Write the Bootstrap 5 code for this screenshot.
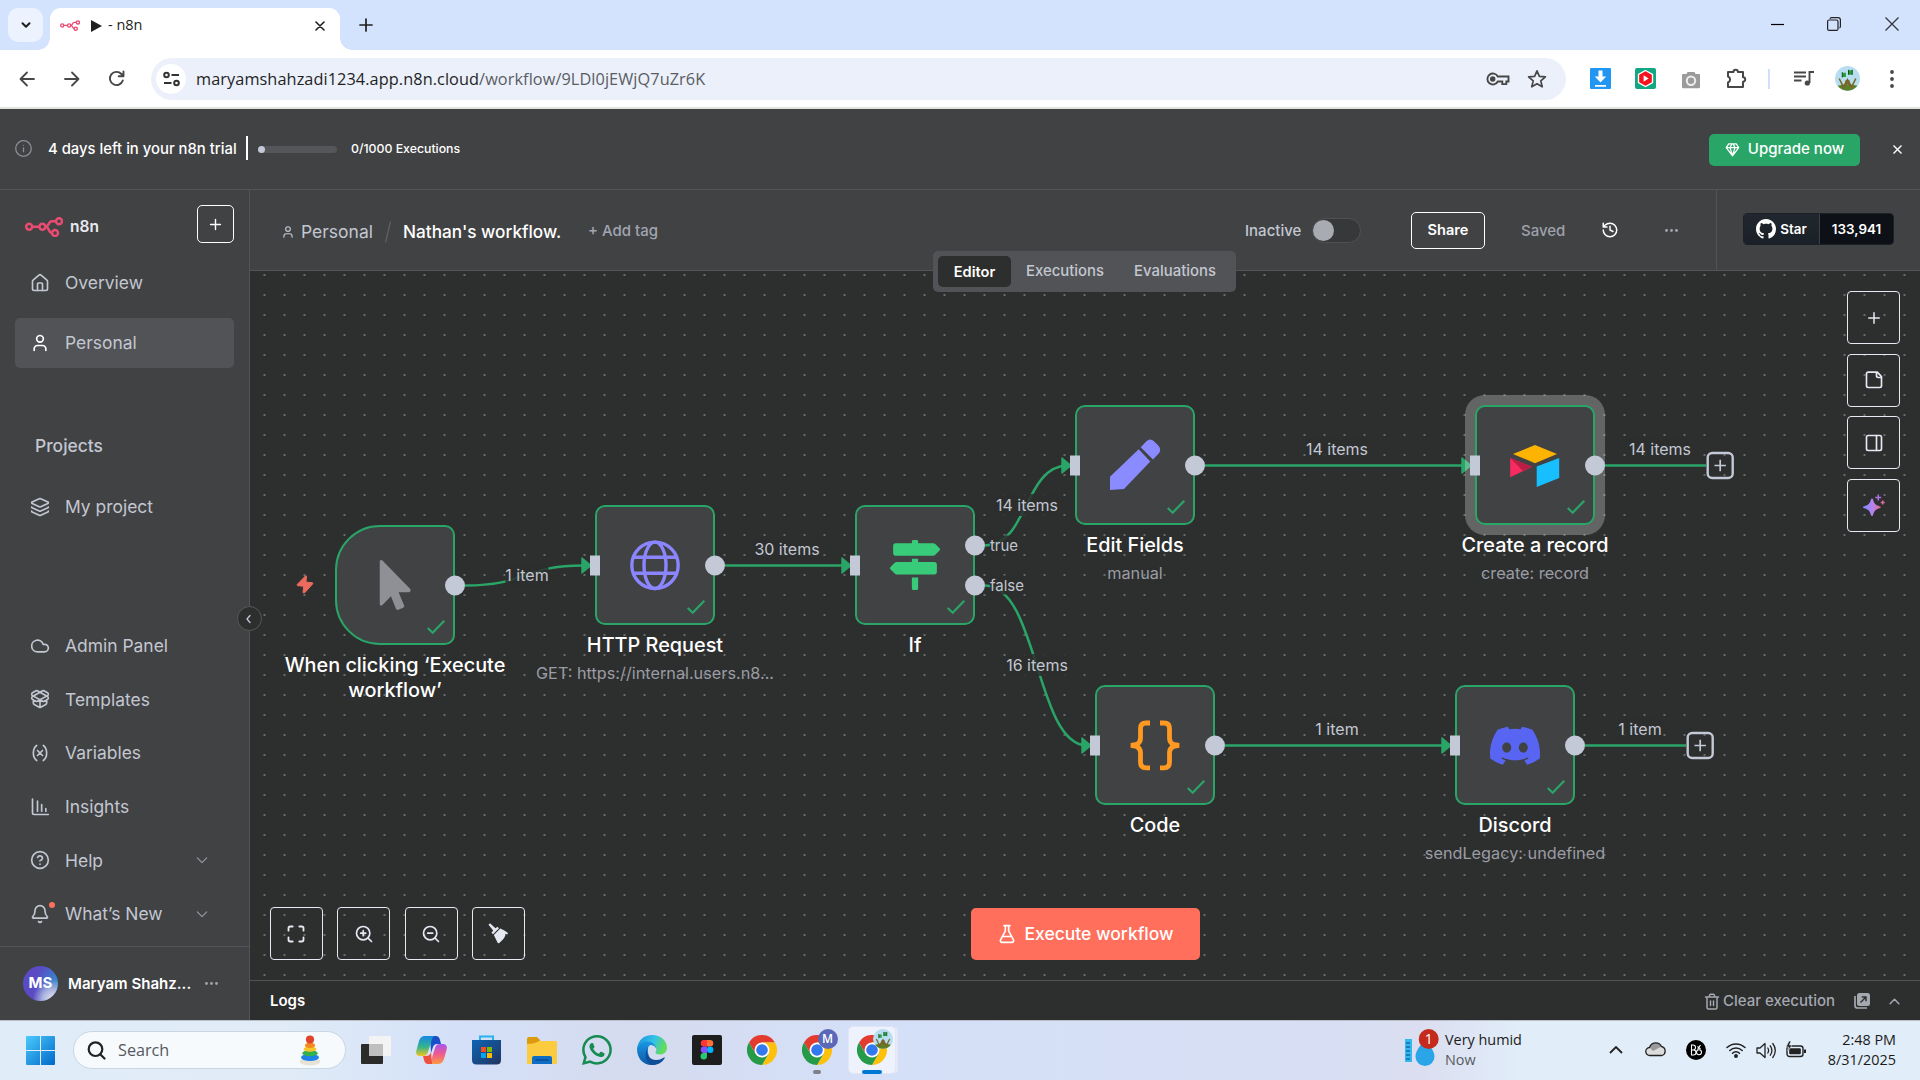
<!DOCTYPE html>
<html lang="en">
<head>
<meta charset="utf-8">
<meta name="viewport" content="width=device-width, initial-scale=1">
<title>▶ - n8n</title>
<link href="https://cdn.jsdelivr.net/npm/bootstrap@5.3.0/dist/css/bootstrap.min.css" rel="stylesheet">
<script src="https://cdn.jsdelivr.net/npm/bootstrap@5.3.0/dist/js/bootstrap.bundle.min.js"></script>
<style>
:root{--pane:#414244;--line:#535457;--ink:#c3c7d1;--ok:#2aa568;--board:#2d2e2e}
html,body{height:100%;margin:0}
body{width:1920px;height:1080px;overflow:hidden;font-family:Inter,"Liberation Sans",sans-serif;font-size:15px;line-height:1.25;color:var(--ink);background:var(--board)}
svg{display:block;flex:none}
.stroke-ic{fill:none;stroke:currentColor;stroke-width:2;stroke-linecap:round;stroke-linejoin:round}
.ui-os{font-family:"Open Sans","Noto Sans",sans-serif}
.cell{display:flex;align-items:center;justify-content:center;flex:none}

/* browser */
.tabstrip{height:50px;background:#d3e2fd;color:#1f1f1f}
.tab-search{width:35px;height:34px;margin:8px 0 0 8px;background:#ecf2fe;border-radius:10px}
.tab-live{width:290px;height:42px;margin:8px 0 0 7px;background:#fff;border-radius:11px 11px 0 0;padding:0 0 7px 10px;position:relative}
.tab-live::before,.tab-live::after{content:"";position:absolute;bottom:0;width:12px;height:12px}
.tab-live::before{left:-12px;background:radial-gradient(circle at 0 0,transparent 11.5px,#fff 12px)}
.tab-live::after{right:-12px;background:radial-gradient(circle at 100% 0,transparent 11.5px,#fff 12px)}
.win-btn{width:57px;height:48px}
.toolbar{height:59px;background:#fff;border-bottom:2px solid #dfe4df;color:#474747;position:relative}
.toolbar .nav-cell{width:45px}
.omnibox{width:1415px;height:42px;margin-left:12px;border-radius:21px;background:#ebf0fa;padding-left:5px}
.site-info{width:30px;height:30px;border-radius:50%;background:#fff}
.url{font-size:16.3px;letter-spacing:.08px;margin:1px 0 0 10px;color:#5a5d63;white-space:nowrap;line-height:24px}
.url span{color:#1f1f1f}
.ext{width:45.5px}

/* trial banner */
.trial{height:81px;background:var(--pane);border-bottom:1px solid var(--line);color:#fff;padding-left:15px}
.trial-text{font-size:14.85px;font-weight:500;margin-left:16px;width:190px;white-space:nowrap}
.trial-rule{width:2px;height:24px;background:#fff;margin-left:8px;margin-top:-3px}
.quota{width:79px;height:7px;border-radius:4px;background:#55565a;margin-left:10px}
.quota div{width:7px;height:7px;border-radius:50%;background:#c3c9d6}
.quota-text{font-size:12.3px;font-weight:500;margin-left:14px}
.btn-upgrade{width:151px;height:32px;border-radius:5px;background:#29a568;color:#fff;font-size:15px;font-weight:500;margin-right:33px;margin-top:1px}

/* sidebar */
.side{width:250px;background:var(--pane);border-right:1px solid var(--line);font-size:17.45px}
.side-add{width:37px;height:38px;border:1.3px solid #fff;border-radius:5px;color:#fff}
.side-link{height:50px;margin:0 15px;padding-left:15px;border-radius:5px;display:flex;align-items:center;color:var(--ink);text-decoration:none}
.side-link .lbl{margin-left:15px}
.side-link.on{background:#525356}
.side-low .side-link{height:53.7px}
.side-foot{height:74px;border-top:1px solid var(--line);padding:0 0 0 23px}
.avatar{width:35px;height:35px;border-radius:50%;background:radial-gradient(circle at 85% 95%,#e8e3f2 0,#aab6e0 22%,transparent 45%),radial-gradient(circle at 100% 45%,#2f8fd0 0,transparent 55%),#5a4bc4;color:#fff;font-weight:700;font-size:15px}

/* workflow header */
.wf-head{height:81px;background:var(--pane);border-bottom:1px solid var(--line);position:relative;white-space:nowrap}
.switch{width:49px;height:25px;border-radius:13px;background:#37383a;border:1px solid #505154;padding:1px 0}
.switch div{width:21px;height:21px;border-radius:50%;background:#a9abb3}
.btn-share{width:74px;height:37px;border:1.3px solid #fff;border-radius:5px;color:#fff;font-weight:600;font-size:14.6px;padding-top:1px!important}
.gh{height:32px;width:151px;border-radius:4px;overflow:hidden;color:#fff;font-weight:600;font-size:13.4px;border:1px solid #1c2128}
.gh>div:first-child{width:76px;background:linear-gradient(#20272f,#1a2027);border-right:1px solid #3c4045}
.gh>div:last-child{flex:1;background:#0d1117}
.view-tabs{position:absolute;left:683px;top:60.5px;width:303px;height:41.5px;background:#525356;border-radius:5px;padding:5px;z-index:5;font-weight:500;font-size:14.9px}
.view-tabs .cell{padding-top:1px}
.view-tabs .on{background:var(--board);color:#fff;border-radius:5px;font-weight:600;font-size:14.6px}

/* board */
.board{position:relative;flex:1;overflow:hidden;background-color:var(--board);background-image:radial-gradient(circle at 10px 10px,#8b8d8f 0,#77797b .6px,transparent 1.15px);background-size:20px 20px;background-position:4.5px -6px}
.plane{position:absolute;left:-250px;top:-271px;width:1920px;height:1080px}
.wires{position:absolute;left:0;top:0}
.wnode{position:absolute;width:250px;display:flex;flex-direction:column;align-items:center;text-align:center}
.wbox{width:120px;height:120px;border:2.2px solid var(--ok);border-radius:10px;background:var(--pane);position:relative}
.wbox>svg{position:absolute;left:-2px;top:-2px}
.wbox.start{border-radius:45px 10px 10px 45px}
.wbox.picked{box-shadow:0 0 0 10px rgba(255,255,255,.26)}
.wtitle{font-size:19.85px;font-weight:500;color:#fff;line-height:25px;margin-top:7.5px}
.wsub{font-size:16.25px;color:#9a9ca3;line-height:24px;margin-top:3.5px;white-space:nowrap}
.wlabel{position:absolute;transform:translate(-50%,-50%);font-size:16px;line-height:22px;color:var(--ink);background:rgba(45,46,46,.85);white-space:nowrap;margin-top:-1px}
.wport{font-size:15px;line-height:19px}
.right-tools{position:absolute;right:20px;top:20px;gap:9.5px;display:flex;flex-direction:column}
.sq{width:52.6px;height:53px;border:1.3px solid #e6e8f2;border-radius:4px;color:#e6e8f2;display:flex;align-items:center;justify-content:center;background:none}
.low-tools{position:absolute;left:20px;bottom:20px;gap:14.9px;display:flex}
.btn-exec{position:absolute;left:721px;top:637px;width:229px;height:52px;border-radius:5px;background:#ff6f5c;color:#fff;font-size:17.5px;font-weight:500;display:flex;align-items:center;justify-content:center;border:0;white-space:nowrap}
.logbar{height:40px;border-top:1px solid var(--line);background:var(--board);color:#a5a8b1;font-weight:500;padding:1px 0 0 20px}
.fold{position:absolute;left:237px;top:606px;width:25px;height:25px;border-radius:50%;background:var(--board);border:1px solid #565759;z-index:6;display:flex;align-items:center;justify-content:center}

/* taskbar */
.taskbar{height:60px;border-top:1px solid #b9bec8;padding-bottom:1px;background:linear-gradient(90deg,#e0ecf7 0,#e0ebf7 15%,#d4e0f8 24%,#d5dbef 33%,#d4e0f8 45%,#d8dff4 70%,#dbdef0 74%,#e1edf9 79%);color:#1b1b1b}
.find{width:273px;height:38px;border-radius:19px;background:#f6fafd;border:1px solid #c9d6e4;padding-left:13px;margin-left:18px}
.task{width:55px;height:60px}
.task-live{width:48px;height:48px;background:#eef2fc;border:1px solid #e2e6f4;border-radius:5px;box-shadow:3px 0 0 -1px #e3e9f8}
.tiny{font-size:14.4px;line-height:20px}
</style>
</head>
<body class="d-flex flex-column">

<svg width="0" height="0" class="position-absolute">
  <defs>
    <symbol id="n8n" viewBox="0 0 38 20"><g fill="none" stroke="#ea4b71" stroke-width="2.5"><circle cx="4.2" cy="9.8" r="3"/><circle cx="17.4" cy="9.8" r="3"/><circle cx="34" cy="4.2" r="3"/><circle cx="30" cy="16" r="3"/><path d="M7.2 9.8h7.2M20.4 9.8c4 0 2.500-5.600 6.500-5.600h4M20.400 9.800c4 0 3 6.200 6.600 6.200"/></g></symbol>
    <symbol id="chrome" viewBox="0 0 48 48"><path fill="#e33b2e" d="M3.200 12A24 24 0 0 1 44.800 12H24L13.600 30z"/><path fill="#fdc10c" d="M44.800 12A24 24 0 0 1 24 48L34.400 30 24 12z"/><path fill="#259a48" d="M24 48A24 24 0 0 1 3.200 12L13.600 30h20.800z"/><circle cx="24" cy="24" r="12" fill="#fff"/><circle cx="24" cy="24" r="9.300" fill="#3279ef"/></symbol>
    <symbol id="grove" viewBox="0 0 24 24"><circle cx="12" cy="12" r="12" fill="#b7def0"/><path d="M2.500 19q9.500-3 19 0A12 12 0 0 1 2.500 19" fill="#5d7f2a"/><path d="M4 12l4 8 4-7 4 7 4-8M8 20l6-6M16 20l-6-6" fill="none" stroke="#7a6426" stroke-width="1.500"/><path d="M7 6.500h3.500v4H7zM13 4h3.500v4.500H13z" fill="#25a13a"/><path d="M7 6v5M13 3.500v5M16.500 3.500v5" stroke="#204a20" stroke-width="1"/></symbol>
    <symbol id="plus" viewBox="0 0 24 24"><path d="M5 12h14M12 5v14"/></symbol>
    <symbol id="person" viewBox="0 0 24 24"><path d="M19 21v-2a4 4 0 0 0-4-4H9a4 4 0 0 0-4 4v2"/><circle cx="12" cy="7" r="4"/></symbol>
    <symbol id="down" viewBox="0 0 24 24"><path d="m4 8.500 8 8 8-8"/></symbol>
    <symbol id="dots" viewBox="0 0 24 24"><g fill="currentColor" stroke="none"><circle cx="4" cy="12" r="2.300"/><circle cx="12" cy="12" r="2.300"/><circle cx="20" cy="12" r="2.300"/></g></symbol>
    <symbol id="tick" viewBox="0 0 120 120"><path d="M92.700 103l5 4.700L109.300 95.700" fill="none" stroke="#2aa568" stroke-width="2.200"/></symbol>
  </defs>
</svg>

<!-- tab strip -->
<div class="tabstrip d-flex flex-none">
  <div class="tab-search cell"><svg width="12" height="12" viewBox="0 0 12 12" class="stroke-ic"><path d="M2.500 4.200 6 7.700l3.500-3.500"/></svg></div>
  <div class="tab-live d-flex align-items-center">
    <svg width="20" height="11"><use href="#n8n"/></svg>
    <svg width="11" height="12" viewBox="0 0 11 12" style="margin-left:11px"><path d="M0 0l11 6-11 6z" fill="#1f1f1f"/></svg>
    <span class="ui-os" style="font-size:14.500px;margin:-1px 0 0 6px">- n8n</span>
    <svg width="10" height="10" viewBox="0 0 10 10" class="stroke-ic ms-auto" style="margin-right:15px;stroke-width:1.600"><path d="M1 1l8 8M9 1 1 9"/></svg>
  </div>
  <div class="cell" style="width:52px"><svg width="14" height="14" viewBox="0 0 14 14" class="stroke-ic" style="stroke-width:1.700"><path d="M7 1v12M1 7h12"/></svg></div>
  <div class="d-flex ms-auto">
    <div class="win-btn cell"><svg width="13" height="13" viewBox="0 0 13 13" stroke="#000" stroke-width="1.200"><path d="M0 6.500h13"/></svg></div>
    <div class="win-btn cell"><svg width="14" height="14" viewBox="0 0 14 14" fill="none" stroke="#222" stroke-width="1.200" style="margin-right:2px"><rect x=".600" y="3" width="10.400" height="10.400" rx="1.500"/><path d="M3 1.800Q3.200.600 4.600.600H11q2.400 0 2.400 2.400v6.500q0 1.200-1 1.400"/></svg></div>
    <div class="win-btn cell"><svg width="14" height="14" viewBox="0 0 14 14" stroke="#333" stroke-width="1.200"><path d="M.500.500l13 13M13.500.500l-13 13"/></svg></div>
  </div>
</div>

<!-- toolbar -->
<div class="toolbar d-flex align-items-center flex-none">
  <div class="nav-cell cell" style="margin-left:4px"><svg width="16" height="16" viewBox="0 0 16 16" class="stroke-ic" style="stroke-width:1.800"><path d="M15 8H1.500M8 1.500 1.500 8 8 14.500"/></svg></div>
  <div class="nav-cell cell"><svg width="16" height="16" viewBox="0 0 16 16" class="stroke-ic" style="stroke-width:1.800"><path d="M1 8h13.500M8 1.500 14.500 8 8 14.500"/></svg></div>
  <div class="nav-cell cell"><svg width="17" height="17" viewBox="0 0 17 17" class="stroke-ic" style="stroke-width:1.900"><path d="M14.800 10.500A6.600 6.600 0 1 1 13.400 4L15.500 6.300M15.500 1.500v4.800h-4.800"/></svg></div>
  <div class="omnibox d-flex align-items-center">
    <div class="site-info cell"><svg width="17" height="16" viewBox="0 0 17 16" fill="none" stroke="#333" stroke-width="2"><circle cx="3.500" cy="4" r="2.300"/><path d="M8.500 4H16M1 12h7.500"/><circle cx="13.500" cy="12" r="2.300"/></svg></div>
    <div class="url ui-os"><span>maryamshahzadi1234.app.n8n.cloud</span>/workflow/9LDl0jEWjQ7uZr6K</div>
    <svg class="ms-auto" width="24" height="14" viewBox="0 0 24 14" fill="none" stroke="#474747" stroke-width="1.900" style="margin-top:1px"><path d="M11.800 4.500H22.500v5h-2.200v2.600h-4V9.500h-4.500A5.500 5.500 0 1 1 11.800 4.500z"/><circle cx="6.700" cy="7" r="1.800" fill="#474747"/></svg>
    <svg width="20" height="20" viewBox="0 0 20 20" fill="none" stroke="#474747" stroke-width="1.700" stroke-linejoin="round" style="margin:0 19px 0 17px"><path d="M10 1.800l2.400 5.600 6 .500-4.600 4 1.400 5.900L10 14.700l-5.200 3.100 1.400-5.900-4.600-4 6-.500z"/></svg>
  </div>
  <div class="d-flex align-items-center" style="margin-left:11.500px">
    <div class="ext cell"><svg width="21" height="21" viewBox="0 0 21 21"><rect width="21" height="21" rx="1" fill="#2196f3"/><path d="M8.500 2.500h4v6h3.700l-5.700 6-5.700-6h3.700zM5 17h11v1.800H5z" fill="#fff"/></svg></div>
    <div class="ext cell"><svg width="21" height="21" viewBox="0 0 21 21"><rect width="21" height="21" rx="2" fill="#12a683"/><path d="M10.500 2.500l7 4v8l-7 4-7-4v-8z" fill="#f5111d" stroke="#fff" stroke-width="1.300"/><path d="M8.600 7.300l5 3.200-5 3.200z" fill="#fff"/></svg></div>
    <div class="ext cell"><svg width="20" height="18" viewBox="0 0 20 18" style="margin-top:2px"><path d="M6.500 1h7l1 2H18q1 0 1 1v12q0 1.300-1.300 1.300H2.300Q1 17.300 1 16V4q0-1 1-1h3.500z" fill="#9b9b9b"/><circle cx="10" cy="9.800" r="4.200" fill="none" stroke="#eee" stroke-width="2"/></svg></div>
    <div class="ext cell"><svg width="21" height="21" viewBox="0 0 21 21" fill="none" stroke="#474747" stroke-width="2" stroke-linejoin="round"><path d="M2 4h5.500a2.200 2.200 0 0 1 4.400 0H17v5.300a2.200 2.200 0 0 1 0 4.400V19H2v-4.500a3.200 3.200 0 0 0 0-6z"/></svg></div>
    <div style="width:2.500px;height:20px;background:#d0e0fb;margin:0 12px 0 8px"></div>
    <div class="cell" style="width:43px"><svg width="20" height="17" viewBox="0 0 20 17" fill="none" stroke="#474747" stroke-width="1.900" style="margin-top:-1px"><path d="M0 2.500h12M0 6.500h12M0 10.500h7.500M15.500 13V2H20"/><circle cx="13.300" cy="13" r="2.600" fill="#474747" stroke="none"/></svg></div>
    <div class="cell" style="width:45px"><svg width="25" height="25"><use href="#grove"/></svg></div>
    <div class="cell" style="width:44px"><svg width="4" height="18" viewBox="0 0 4 18" fill="#474747"><circle cx="2" cy="2" r="1.900"/><circle cx="2" cy="9" r="1.900"/><circle cx="2" cy="16" r="1.900"/></svg></div>
  </div>
</div>

<!-- trial banner -->
<div class="trial d-flex align-items-center flex-none">
  <svg width="17" height="17" viewBox="0 0 24 24" class="stroke-ic" style="color:#8c8e95;stroke-width:1.800;margin-top:-1px"><circle cx="12" cy="12" r="11"/><path d="M12 16.500v-5.500M12 7.500v.010"/></svg>
  <span class="trial-text">4 days left in your n8n trial</span>
  <div class="trial-rule"></div>
  <div class="quota"><div></div></div>
  <span class="quota-text">0/1000 Executions</span>
  <button class="btn btn-upgrade ms-auto p-0 border-0 d-flex align-items-center justify-content-center"><svg width="15" height="15" viewBox="0 0 24 24" class="stroke-ic" style="margin-right:8px"><path d="M6 3h12l4 6-10 13L2 9zM11 3 8 9l4 13 4-13-3-6M2 9h20"/></svg>Upgrade now</button>
  <svg width="9" height="9" viewBox="0 0 9 9" stroke="#fff" stroke-width="1.400" style="margin-right:18px"><path d="M.500.500l8 8M8.500.500l-8 8"/></svg>
</div>

<div class="d-flex flex-fill" style="min-height:0">
  <!-- sidebar -->
  <nav class="side d-flex flex-column flex-shrink-0">
    <div class="d-flex" style="height:68px;padding:15px 15px 0 25px">
      <svg width="38" height="20" style="margin-top:12px"><use href="#n8n"/></svg>
      <span style="margin:12px 0 0 7px;font-size:15.500px;font-weight:600;color:#e8eaf0">n8n</span>
      <div class="side-add cell ms-auto"><svg width="17" height="17" class="stroke-ic"><use href="#plus"/></svg></div>
    </div>
    <a class="side-link"><svg width="20" height="20" viewBox="0 0 24 24" class="stroke-ic"><path d="M15 21v-8a1 1 0 0 0-1-1h-4a1 1 0 0 0-1 1v8"/><path d="M3 10a2 2 0 0 1 .710-1.530l7-6a2 2 0 0 1 2.580 0l7 6A2 2 0 0 1 21 10v9a2 2 0 0 1-2 2H5a2 2 0 0 1-2-2z"/></svg><span class="lbl">Overview</span></a>
    <a class="side-link on" style="margin-top:10px"><svg width="20" height="20" class="stroke-ic" style="color:#fff"><use href="#person"/></svg><span class="lbl">Personal</span></a>
    <div style="margin:67px 0 0 35px;font-weight:500;line-height:22px">Projects</div>
    <a class="side-link" style="margin-top:25px"><svg width="20" height="20" viewBox="0 0 24 24" class="stroke-ic"><path d="M12.830 2.180a2 2 0 0 0-1.660 0L2.600 6.080a1 1 0 0 0 0 1.830l8.580 3.910a2 2 0 0 0 1.660 0l8.580-3.900a1 1 0 0 0 0-1.830zM2 12a1 1 0 0 0 .580.910l8.600 3.910a2 2 0 0 0 1.650 0l8.580-3.900A1 1 0 0 0 22 12M2 17a1 1 0 0 0 .580.910l8.600 3.910a2 2 0 0 0 1.650 0l8.580-3.900A1 1 0 0 0 22 17"/></svg><span class="lbl">My project</span></a>
    <div class="side-low mt-auto" style="margin-bottom:5px">
      <a class="side-link"><svg width="20" height="20" viewBox="0 0 24 24" class="stroke-ic"><path d="M17.500 19H9a7 7 0 1 1 6.710-9h1.790a4.500 4.500 0 1 1 0 9Z"/></svg><span class="lbl">Admin Panel</span></a>
      <a class="side-link"><svg width="20" height="20" viewBox="0 0 24 24" class="stroke-ic"><path d="M12 22v-9M15.170 2.210a1.670 1.670 0 0 1 1.630 0L21 4.570a1.930 1.930 0 0 1 0 3.360L8.820 14.790a1.655 1.655 0 0 1-1.640 0L3 12.430a1.930 1.930 0 0 1 0-3.360zM20 13v3.870a2.060 2.060 0 0 1-1.110 1.830l-6 3.080a1.930 1.930 0 0 1-1.780 0l-6-3.080A2.060 2.060 0 0 1 4 16.870V13M21 12.430a1.930 1.930 0 0 0 0-3.360L8.830 2.200a1.640 1.640 0 0 0-1.630 0L3 4.570a1.930 1.930 0 0 0 0 3.360l12.180 6.860a1.636 1.636 0 0 0 1.630 0z"/></svg><span class="lbl">Templates</span></a>
      <a class="side-link"><svg width="20" height="20" viewBox="0 0 24 24" class="stroke-ic"><path d="M8 21s-4-3-4-9 4-9 4-9M16 3s4 3 4 9-4 9-4 9M15 9l-6 6M9 9l6 6"/></svg><span class="lbl">Variables</span></a>
      <a class="side-link"><svg width="20" height="20" viewBox="0 0 24 24" class="stroke-ic"><path d="M3 2.500V19a2 2 0 0 0 2 2h17M9 17V5M14 17V9M19 17v-3"/></svg><span class="lbl">Insights</span></a>
      <a class="side-link"><svg width="20" height="20" viewBox="0 0 24 24" class="stroke-ic"><circle cx="12" cy="12" r="10"/><path d="M9.090 9a3 3 0 0 1 5.830 1c0 2-3 3-3 3M12 17h.010"/></svg><span class="lbl">Help</span><svg width="14" height="14" class="stroke-ic ms-auto" style="margin-right:25.500px;color:#9799a0"><use href="#down"/></svg></a>
      <a class="side-link position-relative"><svg width="20" height="20" viewBox="0 0 24 24" class="stroke-ic"><path d="M10.268 21a2 2 0 0 0 3.464 0M3.262 15.326A1 1 0 0 0 4 17h16a1 1 0 0 0 .740-1.673C19.410 13.956 18 12.499 18 8A6 6 0 0 0 6 8c0 4.499-1.411 5.956-2.738 7.326"/></svg><span class="position-absolute rounded-circle" style="width:6px;height:6px;background:#ff6f5c;left:34px;top:15px"></span><span class="lbl">What’s New</span><svg width="14" height="14" class="stroke-ic ms-auto" style="margin-right:25.500px;color:#9799a0"><use href="#down"/></svg></a>
    </div>
    <div class="side-foot d-flex align-items-center">
      <div class="avatar cell" style="margin-top:-1px">MS</div>
      <span style="margin-left:10px;width:124px;font-size:15.050px;font-weight:600;color:#fff;white-space:nowrap;padding-top:2px">Maryam Shahz...</span>
      <svg width="15" height="15" style="margin-left:12px;color:#a0a2a9"><use href="#dots"/></svg>
    </div>
  </nav>
  <div class="fold"><svg width="12" height="12" viewBox="0 0 24 24" class="stroke-ic" style="stroke-width:2.600;margin-right:2px"><path d="m14 5-6 7 6 7"/></svg></div>

  <main class="d-flex flex-column flex-fill" style="min-width:0">
    <!-- workflow header -->
    <div class="wf-head d-flex align-items-center flex-none">
      <svg width="14" height="14" class="stroke-ic" style="margin-left:31px;margin-top:3px"><use href="#person"/></svg>
      <span style="font-size:17.500px;margin-left:6px;width:72px;padding-top:3px">Personal</span>
      <svg width="6" height="22" viewBox="0 0 6 22" stroke="#5f6064" stroke-width="1.300" style="margin:3px 0 0 12px"><path d="M.500 21.500l5-21"/></svg>
      <span style="font-size:17.200px;font-weight:500;color:#fff;margin-left:12px;width:159px;padding-top:3px">Nathan's workflow.</span>
      <span style="font-weight:500;margin-left:26px;color:#a2a5b0;padding-top:2px">+ Add tag</span>
      <div class="d-flex align-items-center ms-auto h-100">
        <span style="font-weight:500;width:56px;padding-top:2px">Inactive</span>
        <div class="switch" style="margin-left:11px"><div></div></div>
        <button class="btn btn-share p-0" style="margin-left:50px">Share</button>
        <span style="font-weight:500;margin-left:36px;width:45px;color:#9ea1ab;padding-top:2px">Saved</span>
        <svg width="18" height="18" viewBox="0 0 24 24" class="stroke-ic" style="margin-left:35px;color:#fff"><path d="M3 12a9 9 0 1 0 9-9 9.750 9.750 0 0 0-6.740 2.740L3 8M3 3v5h5M12 7v5l4 2"/></svg>
        <svg width="15" height="15" style="margin-left:45px;color:#a2a5b0"><use href="#dots"/></svg>
        <div style="width:1px;height:80px;background:var(--line);margin-left:37px"></div>
        <div class="gh d-flex" style="margin:-2px 26px 0 26px">
          <div class="cell"><svg width="20" height="20" viewBox="0 0 16 16" fill="#fff" style="margin-right:4px"><path d="M8 0C3.580 0 0 3.580 0 8c0 3.540 2.290 6.530 5.470 7.590.400.070.550-.170.550-.380 0-.190-.010-.820-.010-1.490-2.010.370-2.530-.490-2.690-.940-.090-.230-.480-.940-.820-1.130-.280-.150-.680-.520-.010-.530.630-.010 1.080.580 1.230.820.720 1.210 1.870.870 2.330.660.070-.520.280-.870.510-1.070-1.780-.200-3.640-.890-3.640-3.950 0-.870.310-1.590.820-2.150-.080-.200-.360-1.020.080-2.120 0 0 .670-.210 2.200.820.640-.180 1.320-.270 2-.270s1.360.090 2 .270c1.530-1.040 2.200-.820 2.200-.820.440 1.100.160 1.920.080 2.120.510.560.820 1.270.820 2.150 0 3.070-1.870 3.750-3.650 3.950.290.250.540.730.540 1.480 0 1.070-.010 1.930-.010 2.200 0 .210.150.460.550.380A8.010 8.010 0 0 0 16 8c0-4.420-3.580-8-8-8z"/></svg>Star</div>
          <div class="cell">133,941</div>
        </div>
      </div>
      <div class="view-tabs d-flex">
        <div class="on cell" style="width:73px">Editor</div>
        <div class="cell" style="width:108px">Executions</div>
        <div class="cell" style="width:112px">Evaluations</div>
      </div>
    </div>

    <!-- board -->
    <div class="board">
      <div class="plane">
        <svg class="wires" width="1920" height="1080" fill="none" stroke="#2aa568" stroke-width="2.500">
          <path d="M465 585.500C528 585.500 521 565.500 584 565.500M725 565.500H846M985 545.500C1028 545.500 1024 465.500 1068 465.500M985 585.500C1038 585.500 1036 745.500 1087 745.500M1205 465.500H1467M1605 465.500H1706M1225 745.500H1447M1585 745.500H1686"/>
          <g fill="#2aa568" stroke-width="1.500" stroke-linejoin="round"><path id="tip" d="M582 558v15l9-7.500z"/><use href="#tip" x="260"/><use href="#tip" x="480" y="-100"/><use href="#tip" x="500" y="180"/><use href="#tip" x="880" y="-100"/><use href="#tip" x="860" y="180"/></g>
          <g stroke="#c3c9d6" stroke-width="2.400"><rect x="1707.700" y="453" width="25" height="25" rx="4.500"/><rect x="1687.700" y="733" width="25" height="25" rx="4.500"/></g>
          <path d="M1714.500 465.500h11.400M1720.200 459.800v11.400M1694.500 745.500h11.400M1700.200 739.800v11.400" stroke="#c3c9d6" stroke-width="1.700"/>
        </svg>

        <div class="wnode" style="left:270px;top:525px">
          <div class="wbox start"><svg width="120" height="120"><svg x="44.500" y="35" width="31.250" height="50" viewBox="0 0 320 512"><path fill="#8f9096" d="M302.189 329.126H196.105l55.831 135.993c3.889 9.428-.555 19.999-9.444 23.999l-49.165 21.427c-9.165 4-19.443-.571-23.332-9.714l-53.053-129.136-86.664 89.138C18.729 472.710 0 463.554 0 447.977V18.299C0 1.899 19.921-6.096 30.277 5.443l284.412 292.542c11.472 11.179 3.007 31.141-12.500 31.141z"/></svg><use href="#tick"/></svg></div>
          <div class="wtitle">When clicking ‘Execute workflow’</div>
        </div>
        <div class="wnode" style="left:530px;top:505px">
          <div class="wbox"><svg width="120" height="120"><g fill="none" stroke="#8b85ff" stroke-width="3.400"><circle cx="60" cy="60.300" r="23.200"/><ellipse cx="60" cy="60.300" rx="11" ry="23.200"/><path d="M38 52.300h44M38 68.300h44"/></g><use href="#tick"/></svg></div>
          <div class="wtitle">HTTP Request</div><div class="wsub">GET: https://internal.users.n8...</div>
        </div>
        <div class="wnode" style="left:790px;top:505px">
          <div class="wbox"><svg width="120" height="120"><svg x="35" y="35" width="50" height="50" viewBox="0 0 512 512"><path fill="#38cb79" d="M507.310 84.690L464 41.370c-6-6-14.140-9.370-22.630-9.370H288V16c0-8.840-7.160-16-16-16h-32c-8.840 0-16 7.160-16 16v16H56c-13.250 0-24 10.750-24 24v80c0 13.250 10.750 24 24 24h385.370c8.490 0 16.620-3.370 22.630-9.370l43.310-43.310c6.250-6.260 6.250-16.380 0-22.630zM224 496c0 8.840 7.160 16 16 16h32c8.840 0 16-7.160 16-16V384h-64v112zm232-272H288v-32h-64v32H70.630c-8.490 0-16.620 3.370-22.630 9.370L4.690 276.690c-6.250 6.250-6.250 16.380 0 22.630L48 342.630c6 6 14.140 9.370 22.630 9.370H456c13.250 0 24-10.750 24-24v-80c0-13.250-10.750-24-24-24z"/></svg><use href="#tick"/></svg></div>
          <div class="wtitle">If</div>
        </div>
        <div class="wnode" style="left:1010px;top:405px">
          <div class="wbox"><svg width="120" height="120"><path fill="#8a8bff" d="M63.700 44.300l11.600 12.300L49 84l-14 1V71.700zM65.700 42.300l6-6.300q3.500-3 7 0l5 5q3 4 0 7.500l-5.700 6z"/><use href="#tick"/></svg></div>
          <div class="wtitle">Edit Fields</div><div class="wsub">manual</div>
        </div>
        <div class="wnode" style="left:1030px;top:685px">
          <div class="wbox"><svg width="120" height="120"><path d="M55 38h-4q-5.500 0-5.500 5.500V53q0 4.800-4 6.400L36 60.400l5.500 1q4 1.600 4 6.400v9.500q0 5.500 5.500 5.500h4M65 38h4q5.500 0 5.500 5.500V53q0 4.800 4 6.400l5.500 1-5.500 1q-4 1.600-4 6.400v9.500q0 5.500-5.500 5.500h-4" fill="none" stroke="#ff9922" stroke-width="4.800"/><use href="#tick"/></svg></div>
          <div class="wtitle">Code</div>
        </div>
        <div class="wnode" style="left:1410px;top:405px">
          <div class="wbox picked"><svg width="120" height="120"><path fill="#fcb400" d="M38 49l22-9 22 9-22 9.200z"/><path fill="#18bfff" d="M61.700 61.500l22.500-8.500v20l-22.500 9z"/><path fill="#f82b60" d="M35.200 53l22 8.700-22 10.600z"/><path fill="#ba1e45" d="M35.200 53l22 8.700-9 4.300z"/><use href="#tick"/></svg></div>
          <div class="wtitle">Create a record</div><div class="wsub">create: record</div>
        </div>
        <div class="wnode" style="left:1390px;top:685px">
          <div class="wbox"><svg width="120" height="120"><svg x="35" y="35.700" width="50" height="50" viewBox="0 0 16 16"><path fill="#5865f2" d="M13.545 2.907a13.227 13.227 0 0 0-3.257-1.011.050.050 0 0 0-.052.025c-.141.250-.297.577-.406.833a12.190 12.190 0 0 0-3.658 0 8.258 8.258 0 0 0-.412-.833.051.051 0 0 0-.052-.025c-1.125.194-2.220.534-3.257 1.011a.041.041 0 0 0-.021.018C.356 6.024-.213 9.047.066 12.032c.001.014.010.028.021.037a13.276 13.276 0 0 0 3.995 2.020.050.050 0 0 0 .056-.019c.308-.420.582-.863.818-1.329a.050.050 0 0 0-.010-.059.051.051 0 0 0-.018-.011 8.875 8.875 0 0 1-1.248-.595.050.050 0 0 1-.020-.066.051.051 0 0 1 .015-.019c.084-.063.168-.129.248-.195a.050.050 0 0 1 .051-.007c2.619 1.196 5.454 1.196 8.041 0a.052.052 0 0 1 .053.007c.080.066.164.132.248.195a.051.051 0 0 1-.004.085 8.254 8.254 0 0 1-1.249.594.050.050 0 0 0-.030.030.052.052 0 0 0 .003.041c.240.465.515.909.817 1.329a.050.050 0 0 0 .056.019 13.235 13.235 0 0 0 4.001-2.020.049.049 0 0 0 .021-.037c.334-3.451-.559-6.449-2.366-9.106a.034.034 0 0 0-.020-.019Zm-8.198 7.307c-.789 0-1.438-.724-1.438-1.612 0-.889.637-1.613 1.438-1.613.807 0 1.450.730 1.438 1.613 0 .888-.637 1.612-1.438 1.612Zm5.316 0c-.788 0-1.438-.724-1.438-1.612 0-.889.637-1.613 1.438-1.613.807 0 1.451.730 1.438 1.613 0 .888-.631 1.612-1.438 1.612Z"/></svg><use href="#tick"/></svg></div>
          <div class="wtitle">Discord</div><div class="wsub">sendLegacy: undefined</div>
        </div>

        <!-- ports and the trigger bolt -->
        <svg class="wires" width="1920" height="1080" fill="#c3c9d6">
          <circle cx="455" cy="585.500" r="10"/><circle cx="715" cy="565.500" r="10"/><circle cx="975" cy="545.500" r="10"/><circle cx="975" cy="585.500" r="10"/><circle cx="1195" cy="465.500" r="10"/><circle cx="1215" cy="745.500" r="10"/><circle cx="1595" cy="465.500" r="10"/><circle cx="1575" cy="745.500" r="10"/>
          <path d="M590 555.500h10v20h-10zM850 555.500h10v20h-10zM1070 455.500h10v20h-10zM1090 735.500h10v20h-10zM1470 455.500h10v20h-10zM1450 735.500h10v20h-10z"/>
          <path fill="#ec6a5e" stroke="#ec6a5e" stroke-linejoin="round" d="M305.700 575.700l.800.500-.500 6 6.500.500.300 1-8 9-1.300.300-.500-.800.700-6-6.200-.500-.300-1.200z"/>
        </svg>

        <div class="wlabel" style="left:527px;top:575.500px">1 item</div>
        <div class="wlabel" style="left:787px;top:549.500px">30 items</div>
        <div class="wlabel" style="left:1027px;top:505.500px">14 items</div>
        <div class="wlabel" style="left:1037px;top:665.500px">16 items</div>
        <div class="wlabel" style="left:1337px;top:449.500px">14 items</div>
        <div class="wlabel" style="left:1337px;top:729.500px">1 item</div>
        <div class="wlabel" style="left:1660px;top:449.500px">14 items</div>
        <div class="wlabel" style="left:1640px;top:729.500px">1 item</div>
        <div class="wlabel wport" style="left:1004px;top:546px">true</div>
        <div class="wlabel wport" style="left:1007px;top:586px">false</div>
      </div>

      <div class="right-tools">
        <div class="sq"><svg width="18" height="18" class="stroke-ic"><use href="#plus"/></svg></div>
        <div class="sq"><svg width="20" height="20" viewBox="0 0 24 24" class="stroke-ic"><path d="M16 2.500H5a2 2 0 0 0-2 2V19a2 2 0 0 0 2 2h14a2 2 0 0 0 2-2V8zM15 3v4a2 2 0 0 0 2 2h4"/></svg></div>
        <div class="sq"><svg width="20" height="20" viewBox="0 0 24 24" class="stroke-ic"><rect x="3" y="3" width="18" height="18" rx="2"/><path d="M15 3v18"/></svg></div>
        <div class="sq"><svg width="23" height="23" viewBox="0 0 23 23"><defs><linearGradient id="ai"><stop offset="0" stop-color="#7b8bff"/><stop offset=".55" stop-color="#b483f0"/><stop offset="1" stop-color="#e8658c"/></linearGradient></defs><path fill="url(#ai)" d="M10 4.500q.800 0 1 .800c1 4 2 5.500 7 7.200 1 .300 1 1.200 0 1.500-5 1.700-6 3.200-7 7.300-.200 1-1.700 1-2 0-1-4.100-2-5.600-7.300-7.300-1-.300-1-1.200 0-1.500C7 10.800 8 9.300 9 5.300q.200-.800 1-.800z"/><path d="M16.300.500v6M13.300 3.500h6" stroke="#b070e8" stroke-width="1.500"/><path d="M20.700 6.500v4M18.700 8.500h4" stroke="#e06aa0" stroke-width="1.500"/></svg></div>
      </div>
      <div class="low-tools">
        <div class="sq"><svg width="20" height="20" viewBox="0 0 24 24" class="stroke-ic" style="stroke-width:2.200"><path d="M8 3H5a2 2 0 0 0-2 2v3M21 8V5a2 2 0 0 0-2-2h-3M3 16v3a2 2 0 0 0 2 2h3M16 21h3a2 2 0 0 0 2-2v-3"/></svg></div>
        <div class="sq"><svg width="20" height="20" viewBox="0 0 24 24" class="stroke-ic"><circle cx="11" cy="11" r="8"/><path d="M21 21l-4.350-4.350M11 8v6M8 11h6"/></svg></div>
        <div class="sq"><svg width="20" height="20" viewBox="0 0 24 24" class="stroke-ic"><circle cx="11" cy="11" r="8"/><path d="M21 21l-4.350-4.350M8 11h6"/></svg></div>
        <div class="sq"><svg width="21" height="21" viewBox="0 0 21 21" fill="#e6e8f2"><path d="M.500 1.700 2 .300l5.500 5 2-1.600 1.500 1.500-6 6-1.500-1.500 1.700-2.300z"/><path d="M12.300 5.500q3.500 1 7.700 4.500l-.700 1.500-2-.700q.500 4-6 9.200-1.200.800-1.800-.500L5.800 12z"/></svg></div>
      </div>
      <button class="btn-exec"><svg width="20" height="20" viewBox="0 0 24 24" class="stroke-ic" style="margin-right:7px"><path d="M14 2v6a2 2 0 0 0 .245.960l5.510 10.080A2 2 0 0 1 18 22H6a2 2 0 0 1-1.755-2.960l5.510-10.080A2 2 0 0 0 10 8V2M6.453 15h11.094M8.500 2h7"/></svg>Execute workflow</button>
    </div>

    <!-- logs -->
    <div class="logbar d-flex align-items-center flex-none">
      <span style="color:#fff;font-weight:600;padding-top:1px">Logs</span>
      <svg class="ms-auto stroke-ic" width="16" height="17" viewBox="0 0 16 17" style="stroke-width:1.500"><path d="M1.500 4h13M3 4v10.500q0 1.500 1.500 1.500h7q1.500 0 1.500-1.500V4M5.500 4V2.500q0-1.300 1.300-1.300h2.400q1.300 0 1.300 1.300V4M6.500 8v4.500M9.500 8v4.500"/></svg>
      <span style="margin-left:3px;padding-top:1px">Clear execution</span>
      <svg width="16" height="16" viewBox="0 0 16 16" style="margin-left:18.500px"><rect x="3" y="0" width="13" height="13" rx="2.500" fill="#a5a8b1"/><path d="M1 3v9.500Q1 15 3.500 15H13" fill="none" stroke="#a5a8b1" stroke-width="1.700"/><path d="M6.500 9.500l5-5M7.800 4h4.200v4.200" fill="none" stroke="#2d2e2e" stroke-width="1.400"/></svg>
      <svg width="15" height="15" viewBox="0 0 24 24" class="stroke-ic" style="margin:0 18.500px 0 17px;stroke-width:2.400"><path d="m5 15.500 7-7 7 7"/></svg>
    </div>
  </main>
</div>

<!-- taskbar -->
<div class="taskbar d-flex align-items-center flex-none ui-os">
  <svg width="29" height="29" viewBox="0 0 29 29" style="margin-left:26px"><defs><linearGradient id="win" x1="0" y1="0" x2="1" y2="1"><stop offset="0" stop-color="#4ccbfd"/><stop offset="1" stop-color="#0067c8"/></linearGradient></defs><path fill="url(#win)" d="M1 0h13v14H0V1q0-1 1-1zM15 0h13q1 0 1 1v13H15zM0 15h14v14H1q-1 0-1-1zM15 15h14v13q0 1-1 1H15z"/></svg>
  <div class="find d-flex align-items-center">
    <svg width="19" height="19" viewBox="0 0 19 19" fill="none" stroke="#222" stroke-width="2.200" stroke-linecap="round"><circle cx="8.500" cy="8.200" r="6.800"/><path d="M13.200 13.200l4.300 4.300"/></svg>
    <span style="font-size:16.200px;margin:1px 0 0 12px;color:#55585c">Search</span>
    <svg class="ms-auto" width="22" height="31" viewBox="0 0 22 31" style="margin-right:24px"><ellipse cx="11" cy="26.500" rx="10.500" ry="4" fill="#e6e2d6"/><ellipse cx="11" cy="22.500" rx="9" ry="3.400" fill="#1b82e8"/><ellipse cx="11" cy="18.200" rx="7.600" ry="3" fill="#34b14c"/><ellipse cx="11" cy="14.200" rx="6.300" ry="2.600" fill="#f6c62c"/><ellipse cx="11" cy="10.300" rx="5" ry="2.600" fill="#f58a1f"/><circle cx="11" cy="4.500" r="4.100" fill="#e0442b"/></svg>
  </div>
  <div class="d-flex align-items-center" style="margin-left:3px">
    <div class="task cell"><svg width="30" height="28" viewBox="0 0 30 28" style="margin-right:2px"><rect y="8" width="22" height="20" rx="1" fill="#2b2b2a"/><rect x="8" width="22" height="20" rx="1" fill="#f3f3f3"/><rect x="8" y="8" width="14" height="12" fill="#bfbfbf"/></svg></div>
    <div class="task cell"><svg width="31" height="28" viewBox="0 0 31 28"><defs><linearGradient id="cpa" x1="0" y1="0" x2="0" y2="1"><stop offset="0" stop-color="#1488e6"/><stop offset=".55" stop-color="#35b58b"/><stop offset="1" stop-color="#f3c51d"/></linearGradient><linearGradient id="cpb" x1="0" y1="0" x2="0" y2="1"><stop offset="0" stop-color="#a854f0"/><stop offset=".5" stop-color="#f05a8c"/><stop offset="1" stop-color="#fb9a45"/></linearGradient></defs><path d="M14 0h6q3 0 4 4l1 4h-4q-3 0-4 3l-2 6" fill="#1a4fc9"/><path d="M9 0h10q-2 0-3 3l-4 13q-1 4-5 4H4q-5 0-3.500-6L3 5q1.500-5 6-5z" fill="url(#cpa)"/><path d="M22 28H11q3 0 4-3l4-13q1-4 5-4h3q5 0 3.500 6L28 23q-1.500 5-6 5z" fill="url(#cpb)"/><path d="M16 28h-4q-3 0-4-4l-1-4h3q4 0 5-4" fill="#ee4f3f"/></svg></div>
    <div class="task cell"><svg width="29" height="30" viewBox="0 0 29 30"><defs><linearGradient id="sto" x1="0" y1="0" x2="1" y2="1"><stop offset="0" stop-color="#0c65b5"/><stop offset="1" stop-color="#23345f"/></linearGradient></defs><path d="M8 6V1.500h13V6" fill="none" stroke="#25b4ef" stroke-width="2"/><path d="M0 5h29v20q0 4.500-4.500 4.500h-20Q0 29.500 0 25z" fill="url(#sto)"/><path fill="#f25022" d="M9 12h5v5H9z"/><path fill="#7fba00" d="M15 12h5v5h-5z"/><path fill="#00a4ef" d="M9 18h5v5H9z"/><path fill="#ffb900" d="M15 18h5v5h-5z"/></svg></div>
    <div class="task cell"><svg width="30" height="27" viewBox="0 0 30 27"><path d="M0 2q0-2 2-2h8l3 3v4H0z" fill="#dd9b0b"/><path d="M0 7q8 0 12-3h17q1 0 1 1v21q0 1-1 1H0z" fill="#fccb40"/><path d="M5 27v-6q0-2 2-2h16q2 0 2 2v6z" fill="#0f6cc4"/><path d="M8.500 23h13" stroke="#0a4b94" stroke-width="1.500"/></svg></div>
    <div class="task cell"><svg width="30" height="30" viewBox="0 0 16 16" fill="#178b52"><path d="M13.601 2.326A7.854 7.854 0 0 0 7.994 0C3.627 0 .068 3.558.064 7.926c0 1.399.366 2.760 1.057 3.965L0 16l4.204-1.102a7.933 7.933 0 0 0 3.790.965h.004c4.368 0 7.926-3.558 7.930-7.930A7.898 7.898 0 0 0 13.600 2.326zM7.994 14.521a6.573 6.573 0 0 1-3.356-.920l-.240-.144-2.494.654.666-2.433-.156-.251a6.560 6.560 0 0 1-1.007-3.505c0-3.626 2.957-6.584 6.591-6.584a6.560 6.560 0 0 1 4.660 1.931 6.557 6.557 0 0 1 1.928 4.660c-.004 3.639-2.961 6.592-6.592 6.592zm3.615-4.934c-.197-.099-1.170-.578-1.353-.646-.182-.065-.315-.099-.445.099-.133.197-.513.646-.627.775-.114.133-.232.148-.430.050-.197-.100-.836-.308-1.592-.985-.590-.525-.985-1.175-1.103-1.372-.114-.198-.011-.304.088-.403.087-.088.197-.232.296-.346.100-.114.133-.198.198-.330.065-.134.034-.248-.015-.347-.050-.099-.445-1.076-.612-1.470-.160-.389-.323-.335-.445-.340-.114-.007-.247-.007-.380-.007a.729.729 0 0 0-.529.247c-.182.198-.691.677-.691 1.654 0 .977.710 1.916.810 2.049.098.133 1.394 2.132 3.383 2.992.470.205.840.326 1.129.418.475.152.904.129 1.246.080.380-.058 1.171-.480 1.338-.943.164-.464.164-.860.114-.943-.049-.084-.182-.133-.380-.232z"/></svg></div>
    <div class="task cell"><svg width="30" height="30" viewBox="0 0 30 30"><defs><linearGradient id="eg1" x1="0" y1="0" x2="1" y2=".3"><stop offset="0" stop-color="#1b8fdb"/><stop offset=".6" stop-color="#33c3e8"/><stop offset="1" stop-color="#62dc5c"/></linearGradient><linearGradient id="eg2" x1="0" y1="0" x2="0" y2="1"><stop offset="0" stop-color="#1a97e4"/><stop offset="1" stop-color="#0c59a8"/></linearGradient></defs><path fill="url(#eg1)" d="M0 14C1 5 7 0 15 0c9 0 15 6 15 12.500 0 4.500-3 7-7 7-3.500 0-5-1-4.500-2.200 2-3 .500-7.300-4.500-7.300-6 0-8 5-8 9z"/><path fill="url(#eg2)" d="M0 14c1.500-5.500 6-8 11-7.500 5 .500 8 3.500 8 7-1-2.500-3-3.500-5-3.500-4 0-4 8-1 13 2 4 6 5 9 4-2 2-5 3-7.500 3C6 30 0 23 0 14z"/><path fill="#0f4f99" d="M11 12c-3 8 2 13 8 13 4 0 6-1.500 8-2.500 1-.300 1 .500.500 1C24 28.500 20 30 15 30 8 28 7 18 11 12z"/></svg></div>
    <div class="task cell"><svg width="30" height="30" viewBox="0 0 30 30"><rect width="30" height="30" rx="2" fill="#1e1e1e"/><path d="M12 5h3v6.500h-3a3.250 3.250 0 0 1 0-6.500z" fill="#ff3737"/><path d="M15 5h3a3.250 3.250 0 0 1 0 6.500h-3z" fill="#ff7237"/><path d="M12 11.500h3V18h-3a3.250 3.250 0 0 1 0-6.500z" fill="#874fff"/><circle cx="18.200" cy="14.800" r="3.200" fill="#00b6ff"/><path d="M12 18h3v3.300A3.250 3.250 0 1 1 12 18z" fill="#24cb71"/></svg></div>
    <div class="task cell"><svg width="30" height="30"><use href="#chrome"/></svg></div>
    <div class="task cell position-relative"><svg width="30" height="30"><use href="#chrome"/></svg>
      <span class="position-absolute rounded-circle cell text-white" style="width:20px;height:20px;left:28.500px;top:8.500px;background:#5b68b8;font-size:12px;font-weight:600">M</span>
      <span class="position-absolute rounded-pill" style="width:8px;height:4px;left:23.500px;bottom:6px;background:#7d8089"></span></div>
    <div class="task cell position-relative"><div class="task-live cell"><svg width="30" height="30"><use href="#chrome"/></svg></div>
      <svg class="position-absolute" width="20" height="20" style="left:28.500px;top:8.500px"><use href="#grove"/></svg>
      <span class="position-absolute rounded-pill" style="width:20px;height:4px;left:17.500px;bottom:6px;background:#0078d4"></span></div>
  </div>
  <div class="d-flex align-items-center ms-auto">
    <svg width="34" height="38" viewBox="0 0 34 38" style="margin-top:-6px"><path d="M0 11h7v23H0z" fill="#31b9ee"/><path d="M1 15h4M1 19h4M1 23h4M1 27h4M1 31h4" stroke="#1669ad" stroke-width="1.300"/><path d="M20 11c3 5 9.500 11 9.500 17.500a9.500 9.500 0 0 1-19 0C10.500 22 17 16 20 11z" fill="#2aa6e8"/><circle cx="23.700" cy="11" r="10" fill="#c42b1c"/><text x="23.700" y="16" text-anchor="middle" font-size="14" fill="#fff">1</text></svg>
    <div class="tiny" style="width:164px;margin:-1px 0 0 6px"><div>Very humid</div><div style="color:#585b60">Now</div></div>
    <svg width="14" height="8" viewBox="0 0 14 8" fill="none" stroke="#222" stroke-width="1.800"><path d="M1 7l6-6 6 6"/></svg>
    <svg width="22" height="16" viewBox="0 0 22 16" style="margin:-2px 0 0 22px"><path d="M5 14.500a4 4 0 0 1-.500-8 6.500 6.500 0 0 1 12-1 4.700 4.700 0 0 1 .500 9z" fill="#dcdcdc"/><path d="M4.500 6.500a6.500 6.500 0 0 1 12-1L8 10z" fill="#9a9a9a"/><path d="M5 14.500a4 4 0 0 1-.500-8 6.500 6.500 0 0 1 12-1 4.700 4.700 0 0 1 .500 9z" fill="none" stroke="#222" stroke-width="1.300"/></svg>
    <svg width="20" height="20" viewBox="0 0 20 20" style="margin-left:19px"><circle cx="10" cy="10" r="10" fill="#000"/><g fill="none" stroke="#fff" stroke-width="1.100"><path d="M5.500 5v10h2a2.500 2.500 0 0 0 0-5h-2 1.500a2.400 2.400 0 0 0 0-5z"/><circle cx="13" cy="12.300" r="2.500"/><path d="M11.500 9.500 14.500 5M11.500 6.500l3 2.500"/></g></svg>
    <svg width="20" height="16" viewBox="0 0 20 16" fill="none" stroke="#222" stroke-width="1.500" stroke-linecap="round" style="margin-left:20px"><path d="M1 5.500a13 13 0 0 1 18 0M3.800 8.500a9 9 0 0 1 12.400 0M6.500 11.300a5 5 0 0 1 7 0"/><circle cx="10" cy="14" r="1.200" fill="#222"/></svg>
    <svg width="20" height="17" viewBox="0 0 20 17" fill="none" stroke="#222" stroke-width="1.300" stroke-linecap="round" stroke-linejoin="round" style="margin-left:10px"><path d="M1 6v5h3l5 4.500v-14L4 6zM11.800 6q1.600 2.500 0 5M14.300 3.800q3.200 4.700 0 9.400M16.800 1.500q5 7 0 14"/></svg>
    <svg width="20" height="17" viewBox="0 0 20 17" style="margin:-2px 0 0 10px"><rect x="1" y="5" width="16" height="10.500" rx="2.500" fill="none" stroke="#222" stroke-width="1.400"/><rect x="3.200" y="7.200" width="11.600" height="6" rx="1" fill="#222"/><path d="M18 8.500h2v3.500h-2z" fill="#222"/><path d="M3 0 0 6h2.500L2 10l4-6H3.500L5 0z" fill="#222" stroke="#e1edf9" stroke-width=".6"/></svg>
    <div class="tiny text-end" style="width:90px;margin:-1px 24px 0 0"><div>2:48 PM</div><div>8/31/2025</div></div>
  </div>
</div>
</body>
</html>
